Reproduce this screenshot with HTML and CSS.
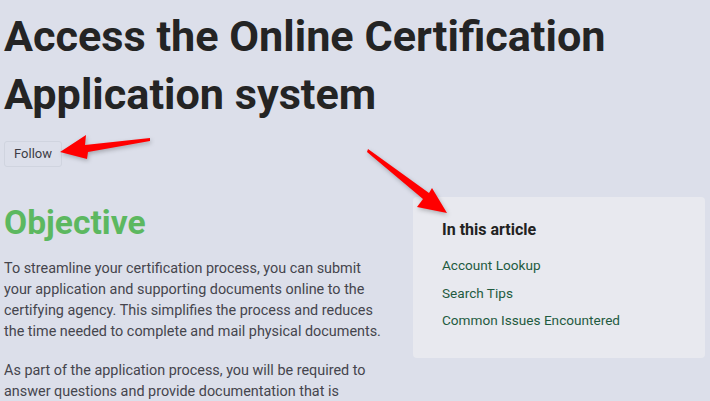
FILE: index.html
```html
<!DOCTYPE html>
<html lang="en">
<head>
<meta charset="utf-8">
<title>Access the Online Certification Application system</title>
<link rel="stylesheet" href="styles.css">
</head>
<body>
<div class="page">
  <h1 class="title">Access the Online Certification Application system</h1>
  <button class="follow">Follow</button>
  <div class="content">
    <main class="main">
      <h2 class="section-title">Objective</h2>
      <p class="text">To streamline your certification process, you can submit your application and supporting documents online to the certifying agency. This simplifies the process and reduces the time needed to complete and mail physical documents.</p>
      <p class="text">As part of the application process, you will be required to answer questions and provide documentation that is</p>
    </main>
    <aside class="toc">
      <h3 class="toc-title">In this article</h3>
      <ul class="toc-list">
        <li><a class="toc-link" href="#">Account Lookup</a></li>
        <li><a class="toc-link" href="#">Search Tips</a></li>
        <li><a class="toc-link" href="#">Common Issues Encountered</a></li>
      </ul>
    </aside>
  </div>
</div>
<svg class="arrows" width="710" height="401" viewBox="0 0 710 401" aria-hidden="true">
  <polygon points="60,152 86,135 85,145 150,138 150,141 88,152 87,159" />
  <polygon points="368,149 429,193 432,188 447,213 417,207 423,199 367,152" />
</svg>
</body>
</html>
```

FILE: styles.css
```css
html, body {
  margin: 0;
  padding: 0;
  background: #dcdfea;
}
body {
  font-family: Roboto, "Noto Sans", Arial, sans-serif;
  color: #333;
  overflow: hidden;
  height: 401px;
}
.page {
  padding: 0 4px;
}
.title {
  margin: 8px 0 0 0;
  font-size: 43.2px;
  line-height: 58px;
  font-weight: 700;
  color: #242424;
}
.follow {
  display: block;
  margin-top: 17px;
  font-family: inherit;
  font-size: 13px;
  line-height: 18px;
  color: #3d3d45;
  background: transparent;
  border: 1px solid #d0d4df;
  border-radius: 3px;
  padding: 3px 9px;
}
.content {
  display: flex;
  align-items: flex-start;
  margin-top: 30px;
}
.main {
  width: 386px;
  flex: none;
}
.section-title {
  margin: 4px 0 14px 0;
  font-size: 33.6px;
  line-height: 43px;
  font-weight: 700;
  color: #5cb860;
}
.text {
  margin: 0 0 18px 0;
  font-size: 14.4px;
  line-height: 21px;
  color: #45454d;
}
.toc {
  margin-left: 23px;
  width: 292px;
  box-sizing: border-box;
  background: #e8e9ef;
  border-radius: 4px;
  padding: 21px 29px 27px 29px;
}
.toc-title {
  margin: 0 0 13px 0;
  font-size: 16px;
  line-height: 24px;
  font-weight: 700;
  color: #222;
}
.toc-list {
  list-style: none;
  margin: 0;
  padding: 0;
  display: flex;
  flex-direction: column;
  gap: 6.5px;
}
.toc-list li {
  line-height: 21px;
  font-size: 13.6px;
}
.toc-link {
  color: #1f5b3f;
  text-decoration: none;
}
.arrows {
  position: absolute;
  left: 0;
  top: 0;
  pointer-events: none;
  fill: #ff0000;
  filter: drop-shadow(1px 2px 2px rgba(0, 0, 0, 0.25));
}
```
